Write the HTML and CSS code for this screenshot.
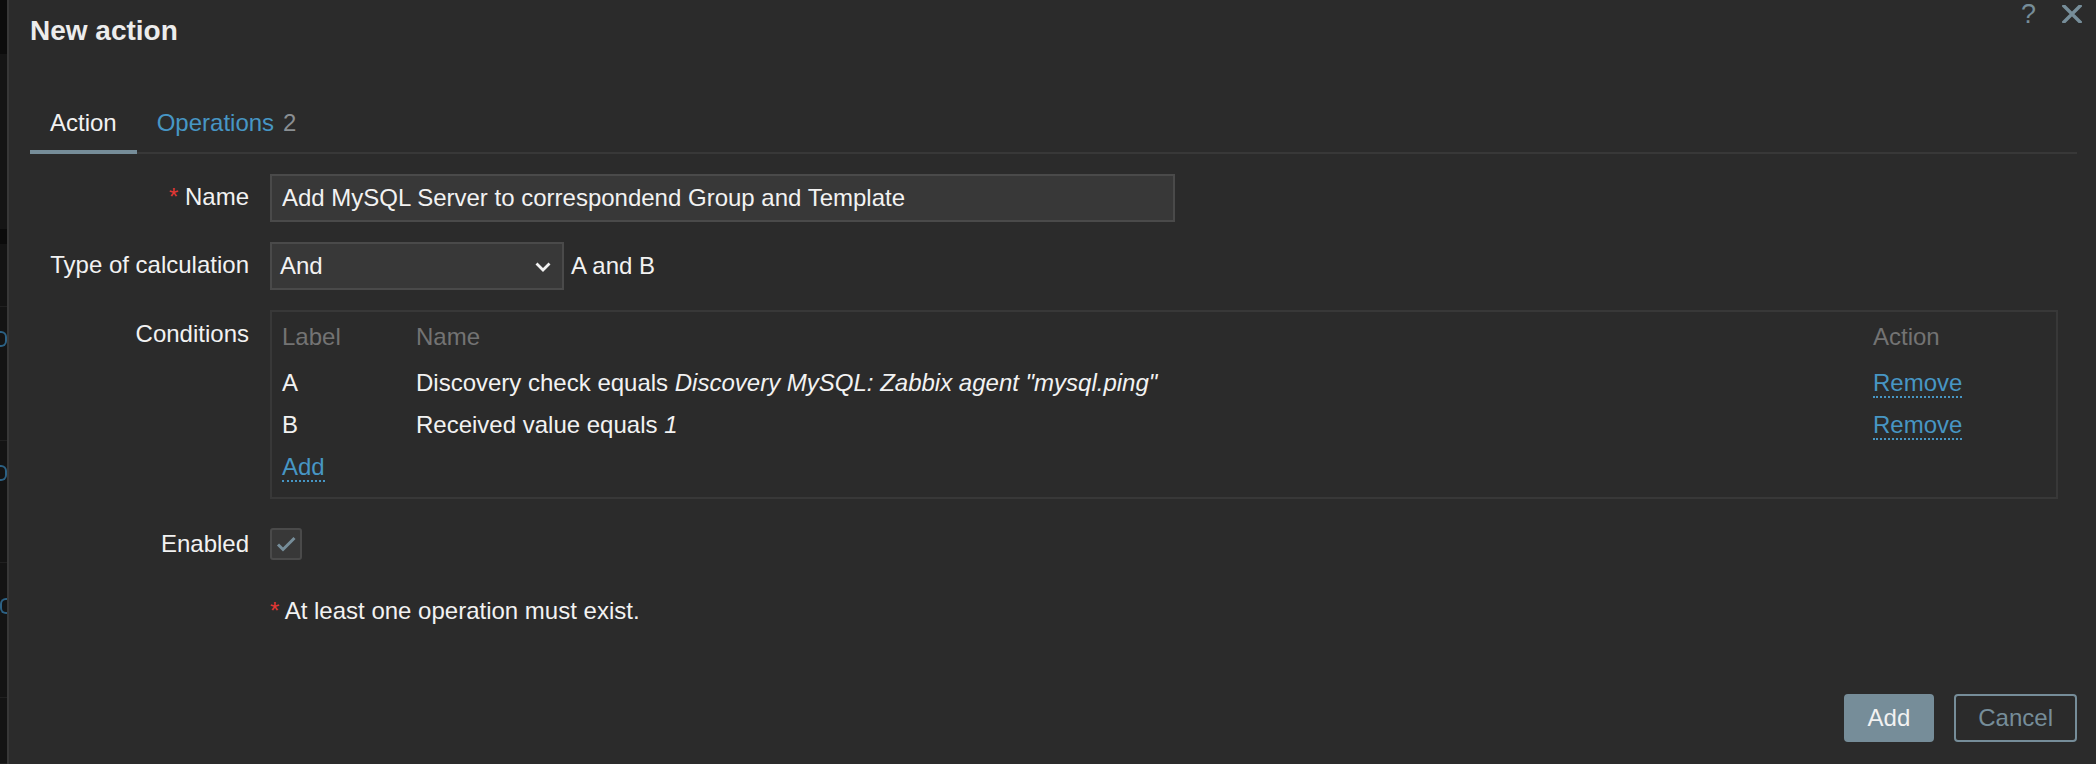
FILE: index.html
```html
<!DOCTYPE html>
<html lang="en">
<head>
<meta charset="utf-8">
<title>New action</title>
<link rel="stylesheet" href="styles.css">
</head>
<body>
<div class="page">
  <aside class="backdrop">
    <div class="bd-top"></div>
    <div class="bd-nav"></div>
    <div class="bd-sep"></div>
    <div class="bd-row bd-row-1"></div>
    <div class="bd-row bd-row-2"><span class="bd-link"></span></div>
    <div class="bd-row bd-row-3"><span class="bd-link"></span></div>
    <div class="bd-row bd-row-4"><span class="bd-link bd-link-open"></span></div>
    <div class="bd-row bd-row-5"></div>
  </aside>

  <section class="dialog">
    <header class="dialog-header">
      <h4 class="dialog-title">New action</h4>
      <div class="header-controls">
        <button class="icon-btn help-btn" type="button">?</button>
        <button class="icon-btn close-btn" type="button">
          <svg width="20" height="18" viewBox="0 0 20 18"><path d="M2 1 L18 17 M18 1 L2 17" stroke="#768d99" stroke-width="3.4" stroke-linecap="square" fill="none"/></svg>
        </button>
      </div>
    </header>

    <ul class="tabs">
      <li class="tab active">Action</li>
      <li class="tab"><a class="tab-link">Operations</a><span class="tab-count">2</span></li>
    </ul>

    <form class="form-grid">
      <label class="form-label"><span class="required">*</span> Name</label>
      <div class="field">
        <input class="text-input" type="text" value="Add MySQL Server to correspondend Group and Template">
      </div>

      <label class="form-label">Type of calculation</label>
      <div class="field">
        <div class="select">
          <span class="select-value">And</span>
          <svg class="select-arrow" width="16" height="10" viewBox="0 0 16 10"><path d="M1.5 1.5 L8 8 L14.5 1.5" stroke="#f2f2f2" stroke-width="2.8" fill="none"/></svg>
        </div>
        <span class="formula">A and B</span>
      </div>

      <label class="form-label form-label-top">Conditions</label>
      <div class="field">
        <div class="conditions">
          <table class="cond-table">
            <colgroup><col class="col-label"><col><col class="col-action"></colgroup>
            <thead>
              <tr><th>Label</th><th>Name</th><th>Action</th></tr>
            </thead>
            <tbody>
              <tr>
                <td>A</td>
                <td>Discovery check equals <em>Discovery MySQL: Zabbix agent "mysql.ping"</em></td>
                <td><a class="link-action">Remove</a></td>
              </tr>
              <tr>
                <td>B</td>
                <td>Received value equals <em>1</em></td>
                <td><a class="link-action">Remove</a></td>
              </tr>
              <tr>
                <td colspan="3"><a class="link-action">Add</a></td>
              </tr>
            </tbody>
          </table>
        </div>
      </div>

      <label class="form-label form-label-check">Enabled</label>
      <div class="field">
        <span class="checkbox">
          <svg width="32" height="32" viewBox="0 0 32 32"><path d="M8 16.5 L13 21.5 L24.5 10" stroke="#768d99" stroke-width="3" fill="none"/></svg>
        </span>
      </div>

      <div class="form-note"><span class="required">*</span> At least one operation must exist.</div>
    </form>

    <footer class="dialog-footer">
      <button class="btn btn-primary" type="button">Add</button>
      <button class="btn btn-alt" type="button">Cancel</button>
    </footer>
  </section>
</div>
</body>
</html>
```
FILE: styles.css
```css
html, body {
  margin: 0;
  padding: 0;
}

body {
  background: #0e0e0e;
  font-family: "Liberation Sans", Arial, sans-serif;
  font-size: 24px;
  color: #f2f2f2;
  overflow: hidden;
}

.page {
  display: flex;
  height: 764px;
}

/* page behind the overlay, darkened */
.backdrop {
  width: 7px;
  flex-shrink: 0;
  display: flex;
  flex-direction: column;
  overflow: hidden;
  background: #141414;
}

.bd-top { height: 54px; background: #0c0c0c; }
.bd-nav { height: 175px; background: #151515; }
.bd-sep { height: 15px; background: #0b0b0b; }

.bd-row {
  border-bottom: 1px solid #202020;
  background: #141414;
}
.bd-row-1 { height: 62px; }
.bd-row-2 { height: 133px; }
.bd-row-3 { height: 121px; }
.bd-row-4 { height: 134px; }
.bd-row-5 { flex: 1; }

/* right edge of a link glyph peeking out from under the dialog */
.bd-link {
  display: block;
  width: 5px;
  height: 12px;
  margin-top: 24px;
  border: 2px solid #2c6184;
  border-left: 0;
  border-radius: 0 6px 6px 0;
}
.bd-row-3 .bd-link { margin-top: 24px; }
.bd-link-open {
  margin-top: 35px;
  border-color: #2c6184;
  border-right-color: transparent;
  border-left: 2px solid #2c6184;
  border-radius: 6px 0 0 6px;
}

/* dialog */
.dialog {
  flex: 1;
  min-width: 0;
  background: #2b2b2b;
  border-left: 2px solid #383838;
  padding: 0 19px 0 21px;
  display: flex;
  flex-direction: column;
}

.dialog-header {
  display: flex;
  align-items: flex-start;
  padding-top: 14px;
}

.dialog-title {
  flex: 1;
  margin: 0;
  font-size: 28px;
  font-weight: bold;
  line-height: 34px;
  color: #ececec;
}

.header-controls {
  display: flex;
  align-items: flex-start;
  gap: 26px;
  margin-top: -14px;
  margin-right: -5px;
}

.icon-btn {
  background: none;
  border: 0;
  padding: 0;
  margin: 0;
  font-family: inherit;
  color: #768d99;
  cursor: pointer;
}

.help-btn {
  font-size: 27px;
  line-height: 28px;
}

.close-btn {
  display: block;
  margin-top: 5px;
}
.close-btn svg { display: block; }

/* tabs */
.tabs {
  list-style: none;
  margin: 42px 0 0;
  padding: 0;
  display: flex;
  border-bottom: 2px solid #383838;
}

.tab {
  padding: 19px 20px 13px;
  line-height: 28px;
  border-bottom: 4px solid transparent;
  margin-bottom: -2px;
  color: #f2f2f2;
}

.tab.active {
  border-bottom-color: #768d99;
}

.tab-link {
  color: #4796c4;
}

.tab-count {
  margin-left: 9px;
  color: #8a8f93;
}

/* form */
.form-grid {
  display: grid;
  grid-template-columns: 219px 1fr;
  column-gap: 21px;
  row-gap: 20px;
  margin: 20px 0 0;
}

.form-label {
  text-align: right;
  line-height: 28px;
  padding-top: 9px;
  white-space: nowrap;
}

.form-label-top { padding-top: 10px; }
.form-label-check { padding-top: 11px; }

.required {
  color: #e33734;
}

.field {
  display: flex;
  align-items: flex-start;
}

.text-input {
  width: 905px;
  height: 48px;
  box-sizing: border-box;
  margin: 0;
  padding: 0 10px;
  background: #383838;
  border: 2px solid #4a4a4a;
  border-radius: 0;
  outline: none;
  font-family: inherit;
  font-size: 24px;
  color: #f2f2f2;
}

.select {
  width: 294px;
  height: 48px;
  box-sizing: border-box;
  padding: 0 11px 0 8px;
  background: #383838;
  border: 2px solid #4a4a4a;
  display: flex;
  align-items: center;
  justify-content: space-between;
}

.select-arrow {
  display: block;
  margin-top: 1px;
}

.formula {
  margin-left: 7px;
  line-height: 48px;
}

/* conditions list */
.conditions {
  width: 1788px;
  box-sizing: border-box;
  border: 2px solid #383838;
  padding-bottom: 9px;
}

.cond-table {
  width: 100%;
  table-layout: fixed;
  border-collapse: collapse;
}

.col-label { width: 134px; }
.col-action { width: 193px; }

.cond-table th,
.cond-table td {
  padding: 0 10px;
  text-align: left;
  vertical-align: middle;
  white-space: nowrap;
  line-height: 28px;
}

.cond-table th {
  height: 50px;
  font-weight: normal;
  color: #737373;
}

.cond-table td {
  height: 42px;
}

.cond-table em {
  font-style: italic;
}

.link-action {
  color: #4796c4;
  border-bottom: 2px dotted #4796c4;
  cursor: pointer;
}

.checkbox {
  display: block;
  width: 32px;
  height: 32px;
  box-sizing: border-box;
  margin-top: 9px;
  background: #383838;
  border: 2px solid #4a4a4a;
  border-radius: 3px;
}
.checkbox svg {
  display: block;
  margin: -2px 0 0 -2px;
}

.form-note {
  grid-column: 2;
  line-height: 28px;
  padding-top: 17px;
}

/* footer */
.dialog-footer {
  display: flex;
  justify-content: flex-end;
  gap: 20px;
  margin-top: 69px;
}

.btn {
  height: 48px;
  box-sizing: border-box;
  padding: 0 22px;
  border: 2px solid #768d99;
  border-radius: 4px;
  font-family: inherit;
  font-size: 24px;
  cursor: pointer;
}

.btn-primary {
  background: #768d99;
  color: #f2f2f2;
}

.btn-alt {
  background: transparent;
  color: #768d99;
}
```
